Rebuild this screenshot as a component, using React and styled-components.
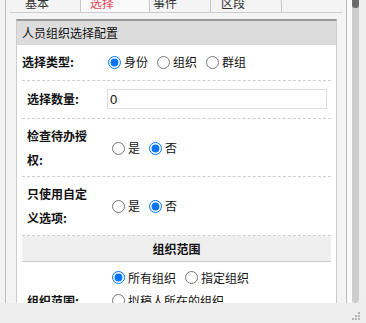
import React from 'react';
import styled, { createGlobalStyle } from 'styled-components';

const GlobalStyle = createGlobalStyle`
  html, body {
    margin: 0;
    padding: 0;
    width: 366px;
    height: 323px;
    overflow: hidden;
    background: #f3f3f3;
  }
  body {
    font-family: "Noto Sans CJK SC", "Liberation Sans", sans-serif;
    font-size: 12px;
    color: #222;
  }
`;

const Window = styled.div`
  display: flex;
  flex-direction: column;
  width: 366px;
  height: 323px;
`;

const Main = styled.div`
  display: flex;
  height: 303px;
  padding-left: 5px;
  background: #f3f3f3;
`;

const Frame = styled.div`
  width: 340px;
  border-left: 1px solid #bdbdbd;
  border-right: 1px solid #bdbdbd;
  background: #f4f4f4;
  overflow: hidden;
`;

// content is scrolled down a little, so the tabs are cut at the top
const Scroller = styled.div`
  margin-top: -12px;
  padding: 0 4px;
`;

const TabBar = styled.div`
  display: flex;
  height: 24px;
  border-bottom: 1px solid #ccc;
`;

const Tab = styled.div`
  box-sizing: border-box;
  width: ${(p) => p.$w}px;
  padding-left: ${(p) => p.$pl}px;
  padding-top: 9px;
  line-height: 12px;
  border-right: 1px solid #c8c8c8;
  border-top-right-radius: ${(p) => (p.$round ? 16 : 0)}px;
  background: ${(p) => (p.$active ? '#fafafa' : 'transparent')};
  color: ${(p) => (p.$active ? '#e2475a' : '#333')};
`;

const Panel = styled.div`
  margin: 6px 5px 0 6px;
  border: 1px solid #ccc;
  border-top: 2px solid #999;
  background: #fff;
`;

const PanelHead = styled.div`
  height: 24px;
  line-height: 24px;
  padding-left: 5px;
  background: #dcdcdc;
  color: #111;
`;

const PanelBody = styled.div`
  padding: 0 5px;
`;

const Row = styled.div`
  display: grid;
  grid-template-columns: 85px 1fr;
  align-items: center;
  padding: ${(p) => p.$pad};
  border-bottom: 1px dashed #cfcfcf;
`;

const Label = styled.div`
  padding-left: ${(p) => p.$indent}px;
  max-width: 66px;
  line-height: 24px;
  font-weight: 700;
  color: #111;
`;

const Options = styled.div`
  display: flex;
  flex-wrap: wrap;
  padding-left: ${(p) => p.$indent}px;
  line-height: ${(p) => p.$lh || 24}px;
`;

const Option = styled.label`
  display: inline-flex;
  align-items: center;
  margin-right: 9px;
  white-space: nowrap;
  color: #111;

  input {
    width: 13px;
    height: 13px;
    margin: 0 3px 0 0;
  }
`;

const OptionLine = styled.div`
  display: flex;
  width: 100%;
`;

const NumberInput = styled.input`
  box-sizing: border-box;
  width: 220px;
  height: 20px;
  padding: 0 2px;
  border: 1px solid #ddd;
  font-family: "Liberation Sans", sans-serif;
  font-size: 13px;
  color: #111;
  outline: none;
`;

const Section = styled.div`
  height: 25px;
  line-height: 25px;
  text-align: center;
  background: #efefef;
  border-bottom: 1px solid #ccc;
  font-weight: 700;
  color: #111;
`;

const Scrollbar = styled.div`
  display: flex;
  width: 19px;
  height: 303px;
  background: #efefef;
`;

const ScrollGap = styled.div`
  width: 5px;
  background: #fafafa;
`;

const Track = styled.div`
  width: 7px;
  height: 303px;
  background: #cdcdcd;
  border-radius: 0 0 3px 3px;
`;

const Thumb = styled.div`
  height: 8px;
  background: #6a6a6a;
  border-radius: 0 0 3px 3px;
`;

const StatusBar = styled.div`
  display: flex;
  justify-content: flex-end;
  align-items: flex-end;
  height: 20px;
  background: #ededed;
`;

const Grip = () => (
  <svg width="10" height="10" viewBox="0 0 10 10" style={{ margin: '0 5px 2px 0' }}>
    {[
      [7, 1],
      [4, 4],
      [7, 4],
      [1, 7],
      [4, 7],
      [7, 7],
    ].map(([x, y]) => (
      <rect key={`${x}-${y}`} x={x} y={y} width="2" height="2" fill="#b5b5b5" />
    ))}
  </svg>
);

const Radio = ({ name, checked, children }) => (
  <Option>
    <input type="radio" name={name} defaultChecked={checked} />
    {children}
  </Option>
);

export default function App() {
  return (
    <Window>
      <GlobalStyle />
      <Main>
        <Frame>
          <Scroller>
            <TabBar>
              <Tab $w={71} $pl={15}>基本</Tab>
              <Tab $w={69} $pl={9} $active $round>选择</Tab>
              <Tab $w={61} $pl={3}>事件</Tab>
              <Tab $w={71} $pl={10} $round>区段</Tab>
            </TabBar>

            <Panel>
              <PanelHead>人员组织选择配置</PanelHead>
              <PanelBody>
                <Row $pad="5px 0 6px">
                  <Label $indent={0}>选择类型:</Label>
                  <Options $indent={1}>
                    <Radio name="type" checked>身份</Radio>
                    <Radio name="type">组织</Radio>
                    <Radio name="type">群组</Radio>
                  </Options>
                </Row>

                <Row $pad="6px 0 7px">
                  <Label $indent={5}>选择数量:</Label>
                  <div>
                    <NumberInput defaultValue="0" />
                  </div>
                </Row>

                <Row $pad="5px 0 4px">
                  <Label $indent={5}>检查待办授权:</Label>
                  <Options $indent={5}>
                    <Radio name="auth">是</Radio>
                    <Radio name="auth" checked>否</Radio>
                  </Options>
                </Row>

                <Row $pad="5px 0 5px">
                  <Label $indent={5}>只使用自定义选项:</Label>
                  <Options $indent={5}>
                    <Radio name="custom">是</Radio>
                    <Radio name="custom" checked>否</Radio>
                  </Options>
                </Row>

                <Section>组织范围</Section>

                <Row $pad="4px 0 5px">
                  <Label $indent={5}>组织范围:</Label>
                  <Options $indent={5} $lh={23}>
                    <OptionLine>
                      <Radio name="scope" checked>所有组织</Radio>
                      <Radio name="scope">指定组织</Radio>
                    </OptionLine>
                    <OptionLine>
                      <Radio name="scope">拟稿人所在的组织</Radio>
                    </OptionLine>
                    <OptionLine>
                      <Radio name="scope">拟稿人所在的部门</Radio>
                    </OptionLine>
                  </Options>
                </Row>
              </PanelBody>
            </Panel>
          </Scroller>
        </Frame>
        <Scrollbar>
          <ScrollGap />
          <Track>
            <Thumb />
          </Track>
        </Scrollbar>
      </Main>
      <StatusBar>
        <Grip />
      </StatusBar>
    </Window>
  );
}
